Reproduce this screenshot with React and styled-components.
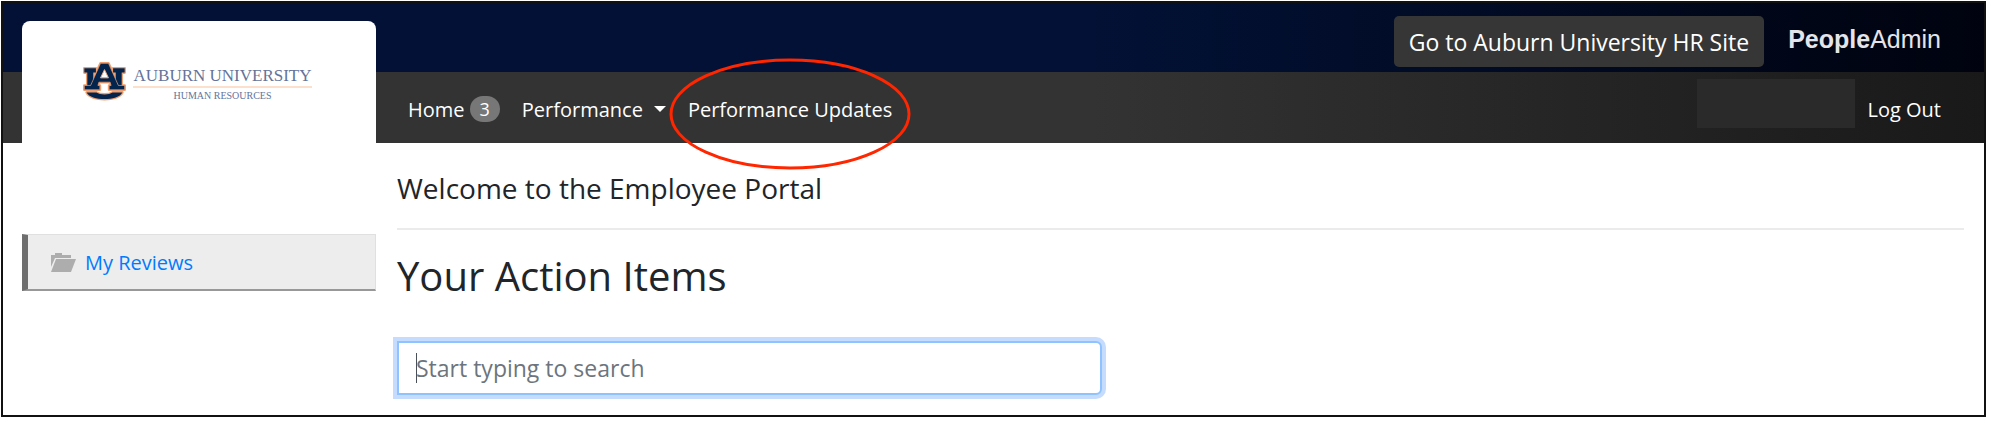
import styled, { createGlobalStyle } from 'styled-components';

const colours = {
  navy: '#021135',
  navyDark: '#00030f',
  grey: '#333333',
  greyDark: '#191919',
  text: '#212529',
  link: '#007bff',
};

const sidebarWidth = '373px';

const GlobalStyle = createGlobalStyle`
  * {
    box-sizing: border-box;
  }

  body {
    margin: 0;
    background: #fff;
    color: ${colours.text};
    font-family: 'Open Sans', sans-serif;
    font-size: 20px;
  }
`;

const Page = styled.div`
  margin: 1px 3px 4px 1px;
  border: 2px solid #111;
`;

// the logo card shares the grid cells with both bars
const Header = styled.header`
  display: grid;
  grid-template-columns: ${sidebarWidth} 1fr;
  grid-template-rows: 69px 71px;
`;

const Bar = styled.div`
  grid-row: ${({ $row }) => $row};
  grid-column: 1 / -1;
  display: flex;
  align-items: center;
  padding-top: ${({ $top }) => $top};
  padding-left: calc(${sidebarWidth} + 32px);
  padding-right: 43px;
  background: linear-gradient(90deg, ${({ $from }) => $from} 55%, ${({ $to }) => $to});
`;

const LogoCard = styled.a`
  grid-row: 1 / 3;
  grid-column: 1;
  display: flex;
  justify-content: center;
  gap: 6px;
  margin: 18px 0 0 19px;
  padding: 40px 4px 0 0;
  border-radius: 8px 8px 0 0;
  background: #fff;
  text-decoration: none;
`;

const LogoText = styled.span`
  display: flex;
  flex-direction: column;
  align-items: center;
  padding-top: 4px;
  color: #64739a;
  font-family: 'Liberation Serif', serif;
`;

const LogoName = styled.span`
  border-bottom: 2px solid #fce0cb;
  font-size: 17px;
  line-height: 21px;
`;

const LogoUnit = styled.span`
  font-size: 10px;
  line-height: 16px;
`;

const SiteButton = styled.button`
  margin-left: auto;
  padding: 0 15px;
  height: 51px;
  border: 0;
  border-radius: 5px;
  background: #363636;
  color: #fff;
  font-family: inherit;
  font-size: 23px;
`;

const Brand = styled.span`
  margin-left: 24px;
  padding-bottom: 4px;
  color: #e4e5ea;
  font-family: 'Liberation Sans', sans-serif;
  font-size: 25px;
`;

const Nav = styled.nav`
  display: flex;
  align-items: center;
  gap: 22px;
`;

const NavLink = styled.a`
  display: flex;
  align-items: center;
  gap: ${({ $gap }) => $gap || '5px'};
  color: #fff;
  font-weight: 500;
  text-decoration: none;
`;

const Badge = styled.span`
  padding: 0 10px;
  border-radius: 13px;
  background: #777;
  font-size: 18px;
  line-height: 26px;
`;

const Caret = styled.span`
  border-top: 6px solid #fff;
  border-left: 6px solid transparent;
  border-right: 6px solid transparent;
`;

const Circled = styled.span`
  position: relative;
`;

const CircleMark = styled.svg`
  position: absolute;
  top: -38px;
  left: 50%;
  transform: translateX(-50%);
  pointer-events: none;
`;

const UserName = styled.span`
  align-self: flex-start;
  width: 158px;
  height: 49px;
  margin: 4px 13px 0 auto;
  background: #2a2a2a;
`;

const Body = styled.div`
  display: grid;
  grid-template-columns: ${sidebarWidth} 1fr;
`;

const Sidebar = styled.aside`
  padding: 91px 0 0 19px;
`;

const SidebarLink = styled.a`
  display: flex;
  align-items: center;
  gap: 9px;
  height: 57px;
  padding-left: 23px;
  border: 1px solid #e0e0e0;
  border-left: 6px solid #6e6e6e;
  border-bottom: 2px solid #989898;
  background: #ededed;
  color: ${colours.link};
  text-decoration: none;
`;

const Main = styled.main`
  padding: 25px 20px 20px 21px;
`;

const Welcome = styled.h1`
  margin: 0;
  padding-bottom: 20px;
  border-bottom: 2px solid #ebebeb;
  font-size: 28px;
  font-weight: 500;
  line-height: 40px;
`;

const SectionTitle = styled.h2`
  margin: 19px 0 38px;
  font-size: 40px;
  font-weight: 500;
  line-height: 54px;
`;

const Search = styled.input`
  display: block;
  width: 45%;
  height: 54px;
  padding: 0 17px;
  border: 2px solid #8fc3ff;
  border-radius: 0 6px 6px 0;
  outline: 0;
  box-shadow: 0 0 0 4px #c6dcff;
  background: linear-gradient(#495057, #495057) 17px 50% / 1px 30px no-repeat #fff;
  color: #495057;
  font-family: inherit;
  font-size: 23px;

  &::placeholder {
    color: #6c757d;
    opacity: 1;
  }
`;

const AuLogo = () => (
  <svg width="45" height="41" viewBox="-2 -2 136 124" aria-hidden="true">
    <g stroke="#f0a070" strokeWidth="8" fill="#f0a070" strokeLinejoin="round">
      <path d="M5 20H40V33H32V56L22 76H14V33H5Z" />
      <path d="M127 20H92V33H100V56L110 76H118V33H127Z" />
      <path d="M12 93H42C52 101 80 101 90 93H120C108 120 24 120 12 93Z" />
      <path d="M54 5H78L108 72H127V85H80V72H86L83 62H49L46 72H52V85H5V72H24Z" />
    </g>
    <g fill="#03244d">
      <path d="M5 20H40V33H32V56L22 76H14V33H5Z" />
      <path d="M127 20H92V33H100V56L110 76H118V33H127Z" />
      <path d="M12 93H42C52 101 80 101 90 93H120C108 120 24 120 12 93Z" />
    </g>
    <path
      d="M54 5H78L108 72H127V85H80V72H86L83 62H49L46 72H52V85H5V72H24Z"
      fill="#03244d"
      stroke="#f0a070"
      strokeWidth="2"
    />
    <path d="M66 24L54 49H78Z" fill="#fff" stroke="#f0a070" strokeWidth="3" />
  </svg>
);

const FolderIcon = () => (
  <svg width="25" height="19" viewBox="0 0 25 19" fill="#adadad" aria-hidden="true">
    <path d="M0 14V2H4V0H11V2H20V5H4Z" />
    <path d="M5 6H25L20 19H0Z" />
  </svg>
);

const App = () => (
  <>
    <GlobalStyle />
    <Page>
      <Header>
        <Bar $row={1} $top="8px" $from={colours.navy} $to={colours.navyDark}>
          <SiteButton type="button">Go to Auburn University HR Site</SiteButton>
          <Brand>
            <b>People</b>Admin
          </Brand>
        </Bar>
        <Bar $row={2} $top="3px" $from={colours.grey} $to={colours.greyDark}>
          <Nav>
            <NavLink href="#">
              Home <Badge>3</Badge>
            </NavLink>
            <NavLink href="#" $gap="11px">
              Performance <Caret />
            </NavLink>
            <Circled>
              <NavLink href="#">Performance Updates</NavLink>
              <CircleMark width="242" height="112" viewBox="0 0 242 112" aria-hidden="true">
                <ellipse cx="121" cy="56" rx="119" ry="54" fill="none" stroke="#ff2600" strokeWidth="3" />
              </CircleMark>
            </Circled>
          </Nav>
          <UserName />
          <NavLink href="#">Log Out</NavLink>
        </Bar>
        <LogoCard href="#">
          <AuLogo />
          <LogoText>
            <LogoName>AUBURN UNIVERSITY</LogoName>
            <LogoUnit>HUMAN RESOURCES</LogoUnit>
          </LogoText>
        </LogoCard>
      </Header>
      <Body>
        <Sidebar>
          <SidebarLink href="#">
            <FolderIcon />
            My Reviews
          </SidebarLink>
        </Sidebar>
        <Main>
          <Welcome>Welcome to the Employee Portal</Welcome>
          <SectionTitle>Your Action Items</SectionTitle>
          <Search type="text" placeholder="Start typing to search" aria-label="Start typing to search" />
        </Main>
      </Body>
    </Page>
  </>
);

export default App;
